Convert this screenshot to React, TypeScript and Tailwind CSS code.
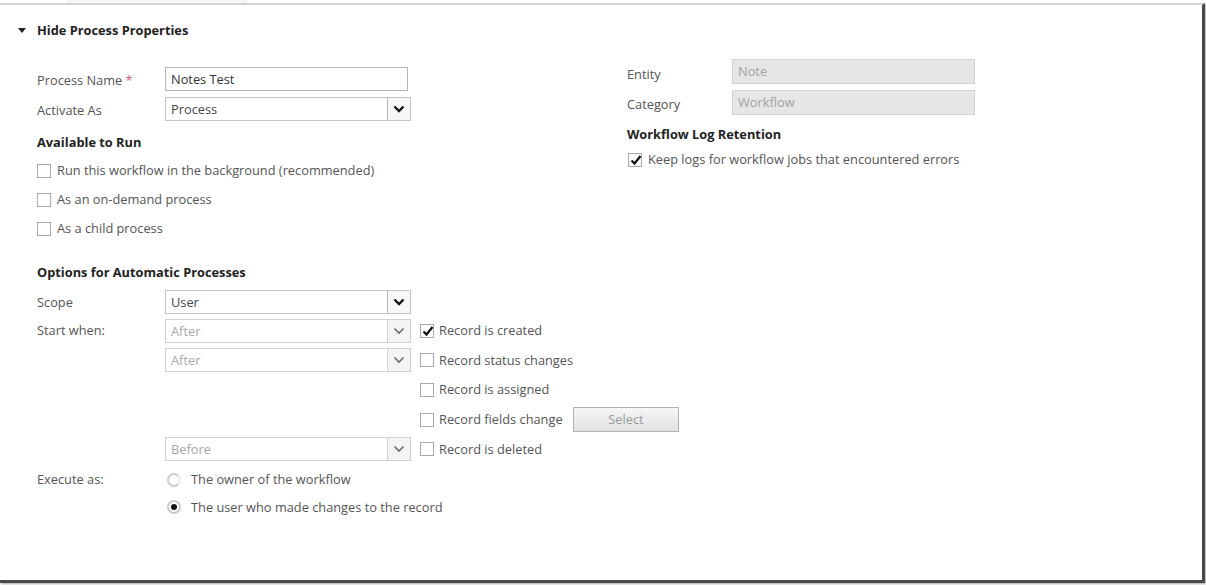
import React from "react";

const font = { fontFamily: '"Open Sans", "Noto Sans", sans-serif' };

function Chevron({ disabled }: { disabled?: boolean }) {
  return (
    <svg width="12" height="8" viewBox="0 0 12 8">
      <path
        d="M1.5 1.5 L6 6 L10.5 1.5"
        fill="none"
        stroke={disabled ? "#6b6b6b" : "#111"}
        strokeWidth={disabled ? 1.6 : 2.3}
      />
    </svg>
  );
}

function SelectBox({ value, disabled }: { value: string; disabled?: boolean }) {
  return (
    <div
      className={`flex h-[24px] w-[246px] shrink-0 items-stretch border ${
        disabled ? "border-[#d2d2d2]" : "border-[#c4c4c4]"
      } bg-white`}
    >
      <span
        className={`flex-1 pl-[5px] text-[12.8px] leading-[22px] ${
          disabled ? "text-[#a8a8a8]" : "text-[#444]"
        }`}
      >
        {value}
      </span>
      <span
        className={`flex w-[23px] items-center justify-center border-l ${
          disabled ? "border-[#cfcfcf] bg-[#f4f4f4]" : "border-[#b8b8b8] bg-[#f7f7f7]"
        }`}
      >
        <Chevron disabled={disabled} />
      </span>
    </div>
  );
}

function Check({ checked }: { checked?: boolean }) {
  return (
    <span className="relative flex h-[14px] w-[14px] shrink-0 items-center justify-center border border-[#a9a9a9] bg-white">
      {checked && (
        <svg width="14" height="12" viewBox="0 0 14 12" className="absolute left-[0px] top-[0px]">
          <path d="M2.5 6.5 L5.5 9.5 L11.5 2" fill="none" stroke="#111" strokeWidth="2.2" />
        </svg>
      )}
    </span>
  );
}

function Radio({ checked }: { checked?: boolean }) {
  return (
    <span
      className={`flex h-[14px] w-[14px] shrink-0 items-center justify-center rounded-full border-2 ${
        checked ? "border-[#c9c9c9]" : "border-[#cdcdcd] border-r-[#ededed]"
      } bg-white`}
    >
      {checked && <span className="h-[6px] w-[6px] rounded-full bg-[#111]" />}
    </span>
  );
}

function CheckRow({ label, checked }: { label: string; checked?: boolean }) {
  return (
    <div className="flex h-[29px] items-center gap-[6px]">
      <Check checked={checked} />
      <span className="text-[12.8px] text-[#555]">{label}</span>
    </div>
  );
}

function TriggerRow({
  label,
  select,
  selectDisabled,
  checked,
  button,
  first,
}: {
  label: string;
  select?: string;
  selectDisabled?: boolean;
  checked?: boolean;
  button?: boolean;
  first?: string;
}) {
  return (
    <div className="flex h-[29.6px] items-center">
      <span className="w-[128px] shrink-0 text-[12.8px] text-[#555]">{first}</span>
      {select ? (
        <SelectBox value={select} disabled={selectDisabled} />
      ) : (
        <span className="w-[246px] shrink-0" />
      )}
      <span className="ml-[9px] flex shrink-0 items-center gap-[5px]">
        <Check checked={checked} />
        <span className="w-[134px] whitespace-nowrap text-[12.8px] text-[#555]">{label}</span>
      </span>
      {button && (
        <span className="flex h-[25px] w-[106px] shrink-0 items-center justify-center border border-[#b3b3b3] bg-gradient-to-b from-[#f6f6f6] to-[#e2e2e2] text-[12.8px] text-[#9a9a9a]">
          Select
        </span>
      )}
    </div>
  );
}

export default function App() {
  return (
    <div className="h-[585px] w-[1206px] overflow-hidden bg-white" style={font}>
      {/* faint tab strip */}
      <div className="flex h-[3px]">
        <div className="ml-[68px] w-[178px] border-x border-[#e8e8e8] bg-[#f7f7f7]" />
      </div>
      <div className="h-[580px] w-[1205px] border-t-2 border-r-[3px] border-b-[3px] border-t-[#d3d3d3] border-r-[#4a4a4a] border-b-[#4a4a4a] shadow-[1px_1px_2px_rgba(0,0,0,0.35)]">
        {/* Section header */}
        <div className="mt-[18px] flex h-[16px] items-center pl-[18px]">
          <svg width="8" height="6" viewBox="0 0 8 6" className="mr-[11px]">
            <path d="M0 0 L8 0 L4 5 Z" fill="#222" />
          </svg>
          <span className="text-[12.8px] font-bold text-[#222]">Hide Process Properties</span>
        </div>

        <div className="flex">
          {/* left column */}
          <div className="w-[627px] shrink-0 pl-[37px]">
            <div className="mt-[28px] flex h-[24px] items-center">
              <span className="w-[128px] pt-[4px] text-[12.8px] text-[#555]">
                Process Name <span className="text-[#d4607a]">*</span>
              </span>
              <div className="h-[24px] w-[243px] border border-[#b5b5b5] bg-white pl-[5px] text-[12.8px] leading-[22px] text-[#333]">
                Notes Test
              </div>
            </div>
            <div className="mt-[6px] flex h-[24px] items-center">
              <span className="w-[128px] pt-[3px] text-[12.8px] text-[#555]">Activate As</span>
              <SelectBox value="Process" />
            </div>

            <div className="mt-[12px] h-[17px] text-[12.8px] font-bold text-[#222]">
              Available to Run
            </div>
            <div className="mt-[6px]">
              <CheckRow label="Run this workflow in the background (recommended)" />
              <CheckRow label="As an on-demand process" />
              <CheckRow label="As a child process" />
            </div>

            <div className="mt-[20px] h-[17px] text-[12.8px] font-bold text-[#222]">
              Options for Automatic Processes
            </div>
            <div className="mt-[7px] flex h-[29px] items-center">
              <span className="w-[128px] pt-[3px] text-[12.8px] text-[#555]">Scope</span>
              <SelectBox value="User" />
            </div>
            <TriggerRow first="Start when:" select="After" selectDisabled checked label="Record is created" />
            <TriggerRow select="After" selectDisabled label="Record status changes" />
            <TriggerRow label="Record is assigned" />
            <TriggerRow label="Record fields change" button />
            <TriggerRow select="Before" selectDisabled label="Record is deleted" />

            <div className="mt-[2px] flex h-[28px] items-center">
              <span className="w-[130px] text-[12.8px] text-[#555]">Execute as:</span>
              <Radio />
              <span className="ml-[10px] text-[12.8px] text-[#555]">The owner of the workflow</span>
            </div>
            <div className="flex h-[27px] items-center">
              <span className="w-[130px]" />
              <Radio checked />
              <span className="ml-[10px] text-[12.8px] text-[#555]">
                The user who made changes to the record
              </span>
            </div>
          </div>

          {/* right column */}
          <div>
            <div className="mt-[20px] flex h-[25px] items-center">
              <span className="w-[105px] pt-[6px] text-[12.8px] text-[#555]">Entity</span>
              <div className="h-[25px] w-[243px] border border-[#d3d3d3] bg-[#e6e6e6] pl-[5px] text-[12.8px] leading-[22px] text-[#a3a3a3]">
                Note
              </div>
            </div>
            <div className="mt-[6px] flex h-[25px] items-center">
              <span className="w-[105px] pt-[4px] text-[12.8px] text-[#555]">Category</span>
              <div className="h-[25px] w-[243px] border border-[#d3d3d3] bg-[#e6e6e6] pl-[5px] text-[12.8px] leading-[22px] text-[#a3a3a3]">
                Workflow
              </div>
            </div>
            <div className="mt-[10px] h-[17px] text-[12.8px] font-bold text-[#222]">
              Workflow Log Retention
            </div>
            <div className="ml-[1px] mt-[7px] flex h-[22px] items-center gap-[6px]">
              <Check checked />
              <span className="text-[12.8px] text-[#555]">
                Keep logs for workflow jobs that encountered errors
              </span>
            </div>
          </div>
        </div>
      </div>
    </div>
  );
}
